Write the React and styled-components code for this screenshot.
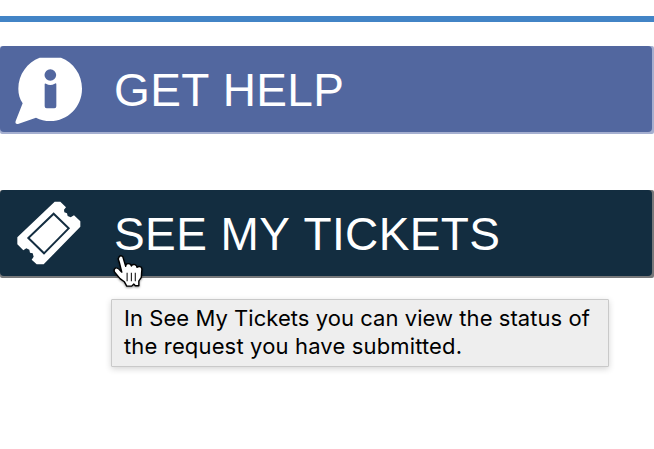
import React from "react";
import styled, { createGlobalStyle } from "styled-components";

const GlobalStyle = createGlobalStyle`
  body { margin: 0; background: #fff; overflow: hidden; }
  button { font: inherit; }
`;

const Page = styled.main`
  width: 654px;
  height: 449px;
  padding-top: 16px;
  box-sizing: border-box;
  background: #fff;
  overflow: hidden;
`;

const Stripe = styled.div`
  height: 6px;
  margin-bottom: 24px;
  background: #4284c6;
`;

const Menu = styled.nav`
  display: flex;
  flex-direction: column;
  gap: 56px;
`;

const Item = styled.div`
  position: relative;
`;

const MenuButton = styled.button`
  display: block;
  width: 654px;
  height: 88px;
  box-sizing: border-box;
  padding: 0 2px 2px 0;
  border: 0;
  border-radius: 2px;
  background: ${(p) => p.$edge};
  color: #fff;
  text-align: left;
  cursor: pointer;
`;

const Face = styled.span`
  display: flex;
  align-items: flex-start;
  height: 86px;
  box-sizing: border-box;
  padding-left: 10px;
  border-radius: 4px;
  background: ${(p) => p.$color};
`;

const Icon = styled.svg`
  display: block;
  flex: none;
  width: 80px;
  height: 80px;
  margin-top: ${(p) => p.$top}px;
`;

const Label = styled.span`
  margin: 18px 0 0 24px;
  font: 46px/52px "Liberation Sans", Arial, sans-serif;
  font-kerning: none;
  letter-spacing: ${(p) => p.$spacing}px;
  white-space: nowrap;
`;

const Tooltip = styled.div`
  position: absolute;
  left: 111px;
  top: 109px;
  width: 498px;
  height: 68px;
  box-sizing: border-box;
  padding: 4px 0 0 12px;
  border: 1px solid #c9c9c9;
  border-radius: 1px;
  background: #eee;
  box-shadow: 0 2px 6px rgba(0, 0, 0, 0.17);
  color: #000;
  font: 22px/28px Inter, sans-serif;
  white-space: nowrap;
`;

const TooltipLine = styled.div`
  letter-spacing: ${(p) => p.$spacing}px;
`;

const Pointer = styled.svg`
  position: absolute;
  left: 104px;
  top: 60px;
  width: 48px;
  height: 46px;
  filter: drop-shadow(0 1px 1px rgba(0, 0, 0, 0.4));
`;

function InfoIcon() {
  return (
    <Icon viewBox="0 0 240 240" $top={4}>
      <path
        fill="#fff"
        d="M89 23H153C190 37 216 73 216 116C216 171 173 213 121 213C105 213 91 210 78 203L24 222Q14 223 17 213L38 160C29 147 25 133 25 116C25 73 52 37 89 23Z"
      />
      <circle cx="121" cy="75" r="17.5" fill="#52679f" />
      <path
        fill="#52679f"
        d="M104 103Q104 99 108 101Q121 109 134 101Q139 98 139 103V169Q139 175 133 175H110Q104 175 104 169Z"
      />
    </Icon>
  );
}

function TicketIcon() {
  return (
    <Icon viewBox="0 0 240 240" $top={5}>
      <path
        fill="#fff"
        d="M134 20H151L168 37L162 44L163 52L171 55L173 63L182 67L192 61L211 79V95L101 208H80L65 194L71 185L68 175L60 173L58 164L49 160L40 166L22 148V127Z"
      />
      <path fill="none" stroke="#132d40" strokeWidth="6" d="M131 56L176 100L102 175L55 129Z" />
    </Icon>
  );
}

function HandPointer() {
  return (
    <Pointer viewBox="0 0 135 135" preserveAspectRatio="none">
      <path
        fill="#fff"
        stroke="#000"
        strokeWidth="4"
        strokeLinejoin="round"
        d="M43 19Q48 14 53 20L61 48Q61 40 68 40Q76 40 77 47Q79 41 87 43Q92 45 93 51Q98 46 104 50Q108 54 106 63L105 80L98 91V105H88L84 100L78 106H64L57 93L45 84L30 65Q26 57 32 53Q39 50 47 62L50 65L43 36L40 26Z"
      />
      <path stroke="#111" strokeWidth="3" d="M65 67V92M77 67V92M88 67V92" />
    </Pointer>
  );
}

export default function App() {
  return (
    <>
      <GlobalStyle />
      <Page>
        <Stripe />
        <Menu>
          <MenuButton $edge="#a5afd0">
            <Face $color="#52679f">
              <InfoIcon />
              <Label $spacing={0.35}>GET HELP</Label>
            </Face>
          </MenuButton>
          <Item>
            <MenuButton $edge="#77787a">
              <Face $color="#132d40">
                <TicketIcon />
                <Label $spacing={0.4}>SEE MY TICKETS</Label>
              </Face>
            </MenuButton>
            <Tooltip role="tooltip">
              <TooltipLine $spacing={0.05}>In See My Tickets you can view the status of</TooltipLine>
              <TooltipLine $spacing={0.15}>the request you have submitted.</TooltipLine>
            </Tooltip>
            <HandPointer />
          </Item>
        </Menu>
      </Page>
    </>
  );
}
